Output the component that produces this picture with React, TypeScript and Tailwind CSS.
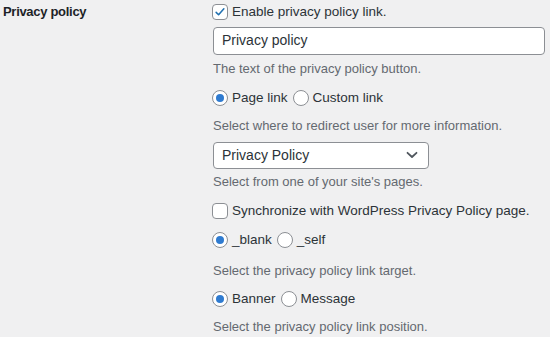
const Check = ({ checked }: { checked?: boolean }) => (
  <span className="w-4 h-4 rounded-[4px] border border-[#8c8f94] bg-white flex items-center justify-center shrink-0">
    {checked && (
      <svg width="14" height="14" viewBox="0 0 20 20" fill="none">
        <path d="M4.5 10.5l3.5 3.5 7.5-8.5" stroke="#2271b1" strokeWidth="2.2" strokeLinecap="round" strokeLinejoin="round" />
      </svg>
    )}
  </span>
);

const Radio = ({ checked }: { checked?: boolean }) => (
  <span className="w-4 h-4 rounded-full border border-[#8c8f94] bg-white flex items-center justify-center shrink-0">
    {checked && <span className="w-2 h-2 rounded-full bg-[#2f7bd0]" />}
  </span>
);

const RadioGroup = ({ options }: { options: { label: string; checked?: boolean }[] }) => (
  <div className="flex items-center h-4 gap-[5px] text-[13.5px] text-[#2c3338]">
    {options.map((o) => (
      <label key={o.label} className="flex items-center gap-[4px]">
        <Radio checked={o.checked} />
        <span className="leading-4">{o.label}</span>
      </label>
    ))}
  </div>
);

const Desc = ({ children, className = "" }: { children: React.ReactNode; className?: string }) => (
  <p className={`h-5 leading-5 text-[13px] text-[#646970] pl-[1px] ${className}`}>{children}</p>
);

export default function App() {
  return (
    <div className="w-[550px] h-[337px] bg-[#f0f0f1] overflow-hidden flex font-['Liberation_Sans',Arial,sans-serif]">
      {/* label column */}
      <div className="w-[212px] shrink-0 pl-[3px] pt-[4px]">
        <p className="text-[13px] font-bold tracking-[-0.3px] text-[#1d2327] leading-4">Privacy policy</p>
      </div>

      {/* fields */}
      <div className="flex-1 flex flex-col">
        <label className="mt-[4px] h-4 flex items-center gap-[4px] text-[13.5px] text-[#2c3338]">
          <Check checked />
          <span>Enable privacy policy link.</span>
        </label>

        <div className="mt-[7px] ml-[1px] w-[332px] h-[28px] rounded-[4px] border border-[#8c8f94] bg-white flex items-center px-[8px] text-[14px] text-[#2c3338]">
          Privacy policy
        </div>
        <Desc className="mt-[4px]">The text of the privacy policy button.</Desc>

        <div className="mt-[11px]">
          <RadioGroup options={[{ label: "Page link", checked: true }, { label: "Custom link" }]} />
        </div>
        <Desc className="mt-[10px]">Select where to redirect user for more information.</Desc>

        <div className="mt-[6px] ml-[1px] w-[216px] h-[28px] rounded-[4px] border border-[#8c8f94] bg-white flex items-center justify-between pl-[8px] pr-[10px] text-[14px] text-[#2c3338]">
          <span>Privacy Policy</span>
          <svg width="12" height="8" viewBox="0 0 12 8" fill="none">
            <path d="M1.5 1.8l4.5 4.2 4.5-4.2" stroke="#50575e" strokeWidth="1.8" strokeLinecap="round" strokeLinejoin="round" />
          </svg>
        </div>
        <Desc className="mt-[3px]">Select from one of your site's pages.</Desc>

        <label className="mt-[11px] h-4 flex items-center gap-[4px] text-[13.5px] text-[#2c3338]">
          <Check />
          <span>Synchronize with WordPress Privacy Policy page.</span>
        </label>

        <div className="mt-[13px]">
          <RadioGroup options={[{ label: "_blank", checked: true }, { label: "_self" }]} />
        </div>
        <Desc className="mt-[13px]">Select the privacy policy link target.</Desc>

        <div className="mt-[10px]">
          <RadioGroup options={[{ label: "Banner", checked: true }, { label: "Message" }]} />
        </div>
        <Desc className="mt-[10px]">Select the privacy policy link position.</Desc>
      </div>
    </div>
  );
}
